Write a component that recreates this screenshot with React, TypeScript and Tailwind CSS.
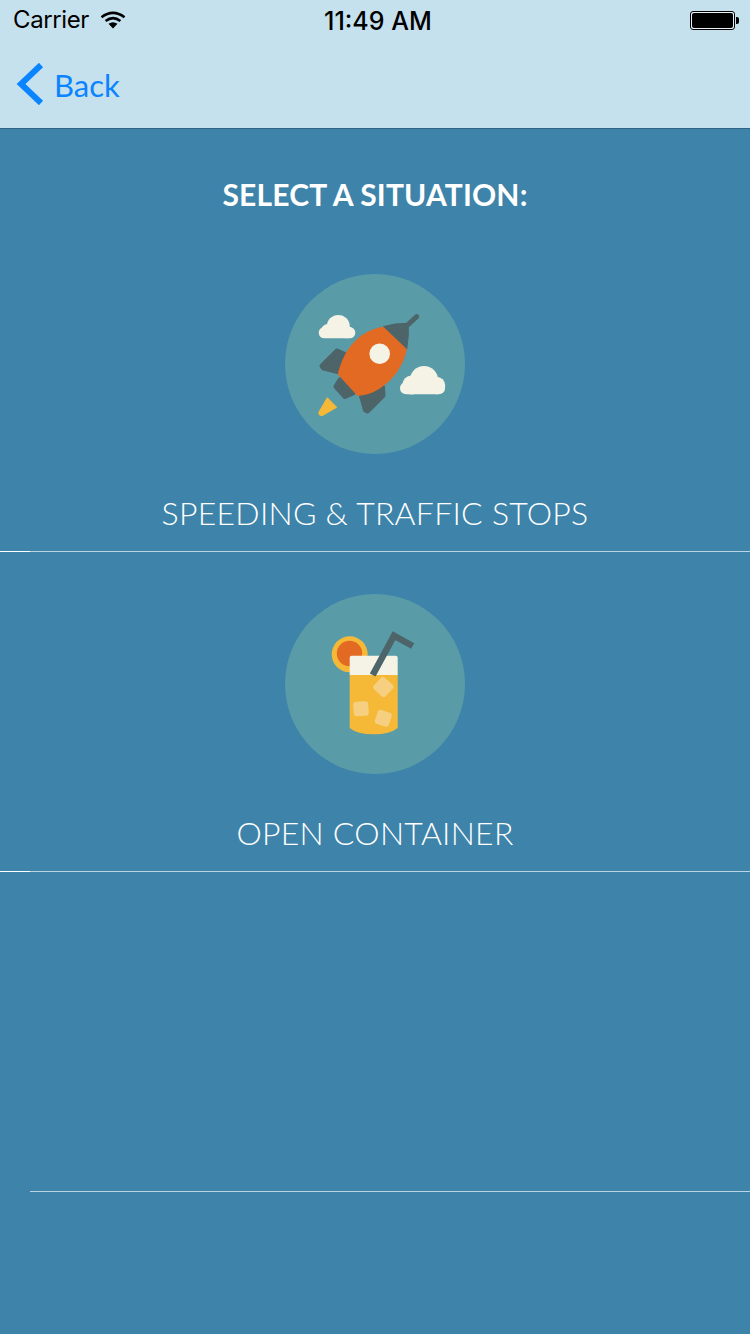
import React from 'react';

const labelFont = "font-['Lato','Open_Sans',sans-serif]";

function RocketIcon() {
  return (
    <svg viewBox="0 0 180 180" className="h-[180px] w-[180px]">
      <circle cx="90" cy="90" r="90" fill="#5a9ba8" />
      {/* clouds */}
      <g fill="#f4f3e6">
        <circle cx="53.3" cy="52.5" r="11.5" />
        <circle cx="43" cy="57" r="7" />
        <circle cx="61.5" cy="58" r="6.3" />
        <rect x="33.7" y="53" width="36.6" height="11.3" rx="5.6" />
        <circle cx="139" cy="106" r="14" />
        <circle cx="126.7" cy="111" r="9.4" />
        <circle cx="151.5" cy="111.5" r="8.7" />
        <rect x="115" y="108" width="45" height="12.3" rx="6.1" />
      </g>
      {/* fins and nozzle */}
      <g fill="#4d6469" stroke="#4d6469" strokeWidth="5" strokeLinejoin="round">
        <path d="M52 77L37 92L38.5 94L55 98L61 81Z" />
        <path d="M97.5 113L98 121.5L82.5 137L80.5 136L76.5 122Z" />
        <path d="M55 106L51 112.5L60 122.5L68 119Z" />
      </g>
      <path d="M98.3 52.7Q110 49 123.3 49.3Q124 62 121.7 75Z" fill="#4d6469" stroke="#4d6469" strokeWidth="1" strokeLinejoin="round" />
      <path d="M123.3 50.3L131.7 42.7" stroke="#4d6469" strokeWidth="5" strokeLinecap="round" />
      <path d="M98.3 52.7C78 56 60 70 52.7 100.3L72.3 121.7C92 122 117 102 121.7 75Z" fill="#e26a23" />
      <circle cx="94.7" cy="79.7" r="10.3" fill="#f4f3e6" />
      <path d="M42.3 123.7L51.7 133.3L37.5 141.5Q33 142 34 138Z" fill="#f5b937" stroke="#f5b937" strokeWidth="1" strokeLinejoin="round" />
    </svg>
  );
}

function DrinkIcon() {
  return (
    <svg viewBox="0 0 180 180" className="h-[180px] w-[180px]">
      <circle cx="90" cy="90" r="90" fill="#5a9ba8" />
      <circle cx="64.7" cy="60.3" r="18" fill="#f5b937" />
      <circle cx="64.5" cy="59.5" r="12.7" fill="#e26a23" />
      <path d="M64.7 81V63.7Q64.7 61.7 66.7 61.7H110.7Q112.7 61.7 112.7 63.7V81Z" fill="#f4f3e6" />
      <path d="M64.7 81H112.7V134Q105 140.3 88.7 140.3Q72 140.3 64.7 134Z" fill="#f5b937" />
      <path d="M87.7 81L109 41.7L127.7 52" fill="none" stroke="#4d6469" strokeWidth="6.5" />
      <g fill="#f6d080">
        <rect x="90.3" y="85" width="16" height="16" rx="3" transform="rotate(42 98.3 93)" />
        <rect x="68.5" y="107.5" width="15" height="14.5" rx="3" transform="rotate(-4 76 115)" />
        <rect x="91" y="117" width="14.6" height="14.6" rx="3" transform="rotate(18 98.3 124.3)" />
      </g>
    </svg>
  );
}

function WifiIcon() {
  return (
    <svg viewBox="0 0 26 18" className="h-[18px] w-[26px]">
      <path d="M1.5 6.2Q13 -2.5 24.5 6.2" fill="none" stroke="#000" strokeWidth="2.6" />
      <path d="M5.6 10Q13 4.2 20.4 10" fill="none" stroke="#000" strokeWidth="2.6" />
      <path d="M8.5 12.8Q13 9.6 17.5 12.8L13 17.6Z" fill="#000" />
    </svg>
  );
}

function BatteryIcon() {
  return (
    <div className="flex items-center">
      <div className="h-[19px] w-[45px] rounded-[3px] border border-black bg-[#e8f2f7] p-px">
        <div className="h-full w-full rounded-[2px] bg-black" />
      </div>
      <div className="ml-px h-[7px] w-[3px] rounded-r-[2px] bg-black" />
    </div>
  );
}

function SituationRow({ icon, label }: { icon?: React.ReactNode; label?: string }) {
  return (
    <div className="relative flex h-[320px] flex-col items-center pt-[42px]">
      {icon}
      {label && (
        <div className={`${labelFont} mt-[40px] text-[32px] font-light leading-[38px] tracking-[0.25px] text-white`}>
          {label}
        </div>
      )}
      <div className={`absolute bottom-0 right-0 h-px bg-[#b9d4e2] ${label ? 'left-0' : 'left-[30px]'}`} />
      {label && <div className="absolute bottom-0 left-0 h-px w-[30px] bg-white" />}
    </div>
  );
}

export default function App() {
  return (
    <div className="flex h-[1334px] w-[750px] flex-col overflow-hidden bg-[#3e83a9]">
      <header className="h-[129px] border-b border-[#2f6485] bg-[#c5e1ee]">
        <div className="relative flex h-[40px] items-center justify-between pl-[13px] pr-[11px] font-['Inter','Liberation_Sans',sans-serif] text-black">
          <div className="flex items-center gap-[11px]">
            <span className="text-[24px] leading-none tracking-[-0.4px]">Carrier</span>
            <WifiIcon />
          </div>
          <span className="absolute left-[324px] top-[7px] text-[25px] font-medium leading-[28px]">11:49 AM</span>
          <BatteryIcon />
        </div>
        <div className="flex h-[88px] items-center pl-[16px]">
          <svg viewBox="0 0 28 42" className="h-[42px] w-[28px]">
            <path d="M25 2L5 21L25 40" fill="none" stroke="#0a84ff" strokeWidth="6" />
          </svg>
          <span className={`${labelFont} ml-[10px] mt-[2px] text-[31px] leading-none text-[#0a84ff]`}>Back</span>
        </div>
      </header>
      <h1 className={`${labelFont} h-[103px] pt-[47px] text-center text-[30px] font-bold leading-[36px] tracking-[0.15px] text-white`}>
        SELECT A SITUATION:
      </h1>
      <SituationRow icon={<RocketIcon />} label="SPEEDING & TRAFFIC STOPS" />
      <SituationRow icon={<DrinkIcon />} label="OPEN CONTAINER" />
      <SituationRow />
    </div>
  );
}
